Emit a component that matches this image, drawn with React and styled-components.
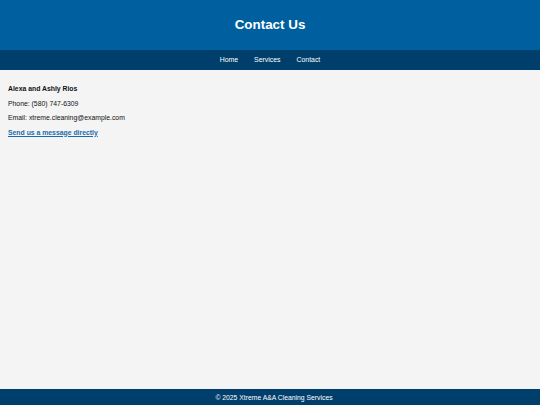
import React from 'react'
import styled, { createGlobalStyle } from 'styled-components'

const GlobalStyle = createGlobalStyle`
    html, body {
        margin: 0;
        padding: 0;
        background: #f4f4f4;
        font-family: "Liberation Sans", Arial, sans-serif;
    }
`

const Page = styled.div`
    display: flex;
    flex-direction: column;
    min-height: 100vh;
`

const Header = styled.header`
    background: #005f9f;
    color: #fff;
    height: 50px;
    display: flex;
    align-items: center;
    justify-content: center;
`

const Title = styled.h1`
    margin: 0;
    font-size: 13.4px;
    font-weight: bold;
    line-height: 16px;
    padding-bottom: 1px;
`

const Nav = styled.nav`
    background: #003e6b;
    height: 20px;
    display: flex;
    align-items: center;
    justify-content: center;
    gap: 16px;
`

const NavLink = styled.a`
    color: #fff;
    font-size: 6.9px;
    text-decoration: none;
    line-height: 8px;
`

const Main = styled.main`
    flex: 1;
    padding: 15px 8px 0;
`

const Line = styled.p`
    margin: 0 0 6px;
    font-size: 6.85px;
    line-height: 8.5px;
    color: #111;
    font-weight: ${props => (props.bold ? 'bold' : 'normal')};
`

const MessageLink = styled.a`
    color: #1a6bab;
    font-weight: bold;
    text-decoration: underline;
`

const Footer = styled.footer`
    background: #003e6b;
    color: #fff;
    height: 16px;
    display: flex;
    align-items: center;
    justify-content: center;
    padding-left: 8px;
    font-size: 6.8px;
`

const App = () => {
    return (
        <Page>
            <GlobalStyle />
            <Header>
                <Title>Contact Us</Title>
            </Header>
            <Nav>
                <NavLink href="#">Home</NavLink>
                <NavLink href="#">Services</NavLink>
                <NavLink href="#">Contact</NavLink>
            </Nav>
            <Main>
                <Line bold>Alexa and Ashly Rios</Line>
                <Line>Phone: (580) 747-6309</Line>
                <Line>Email: xtreme.cleaning@example.com</Line>
                <Line>
                    <MessageLink href="#">Send us a message directly</MessageLink>
                </Line>
            </Main>
            <Footer>&copy; 2025 Xtreme A&amp;A Cleaning Services</Footer>
        </Page>
    )
}

export default App
